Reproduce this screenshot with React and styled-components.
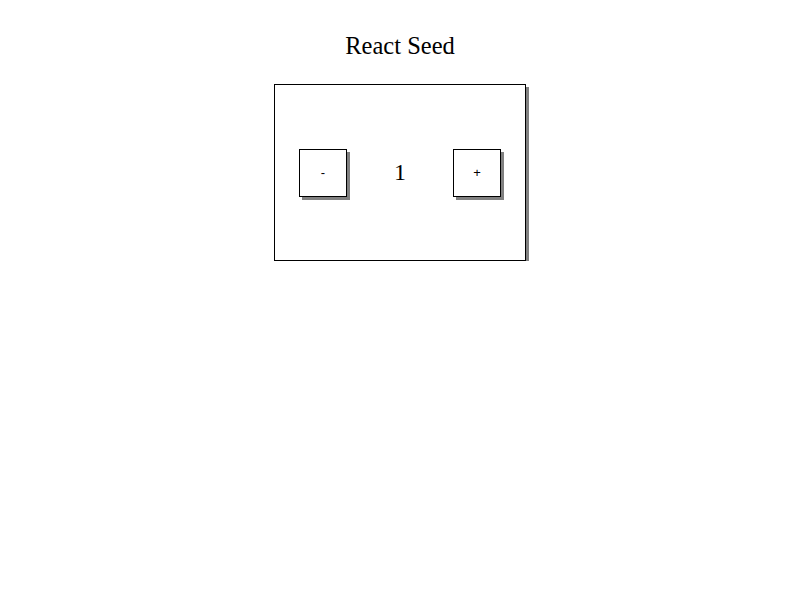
import React, {useState} from 'react'
import styled, {createGlobalStyle} from "styled-components"

const GlobalStyle = createGlobalStyle`
  body {
    margin: 8px;
    background: #ffffff;
    font-family: "Liberation Serif", "Times New Roman", serif;
    color: #000000;
  }
`

const Page = styled.div`
  display: flex;
  flex-direction: column;
  align-items: center;
`

const Title = styled.h2`
  margin: 24px 0 25px 0;
  font-size: 24.5px;
  font-weight: normal;
  line-height: 27px;
`

const Card = styled.div`
  box-sizing: border-box;
  width: 252px;
  height: 177px;
  border: 1px solid #000;
  box-shadow: 3px 3px 0 #808080;
  display: flex;
  align-items: center;
  justify-content: space-between;
  padding: 0 24px;
`

const Button = styled.button`
  box-sizing: border-box;
  width: 48px;
  height: 48px;
  border: 1px solid #000;
  background: #fff;
  box-shadow: 3px 3px 0 #808080;
  font-family: "Liberation Sans", Arial, sans-serif;
  font-size: 13px;
  padding: 0;
  cursor: pointer;
`

const Count = styled.span`
  font-size: 24px;
`

export default function App() {
  const [count, setCount] = useState(1)
  return (
    <>
      <GlobalStyle />
      <Page>
        <Title>React Seed</Title>
        <Card>
          <Button onClick={() => setCount(count - 1)}>-</Button>
          <Count>{count}</Count>
          <Button onClick={() => setCount(count + 1)}>+</Button>
        </Card>
      </Page>
    </>
  )
}
